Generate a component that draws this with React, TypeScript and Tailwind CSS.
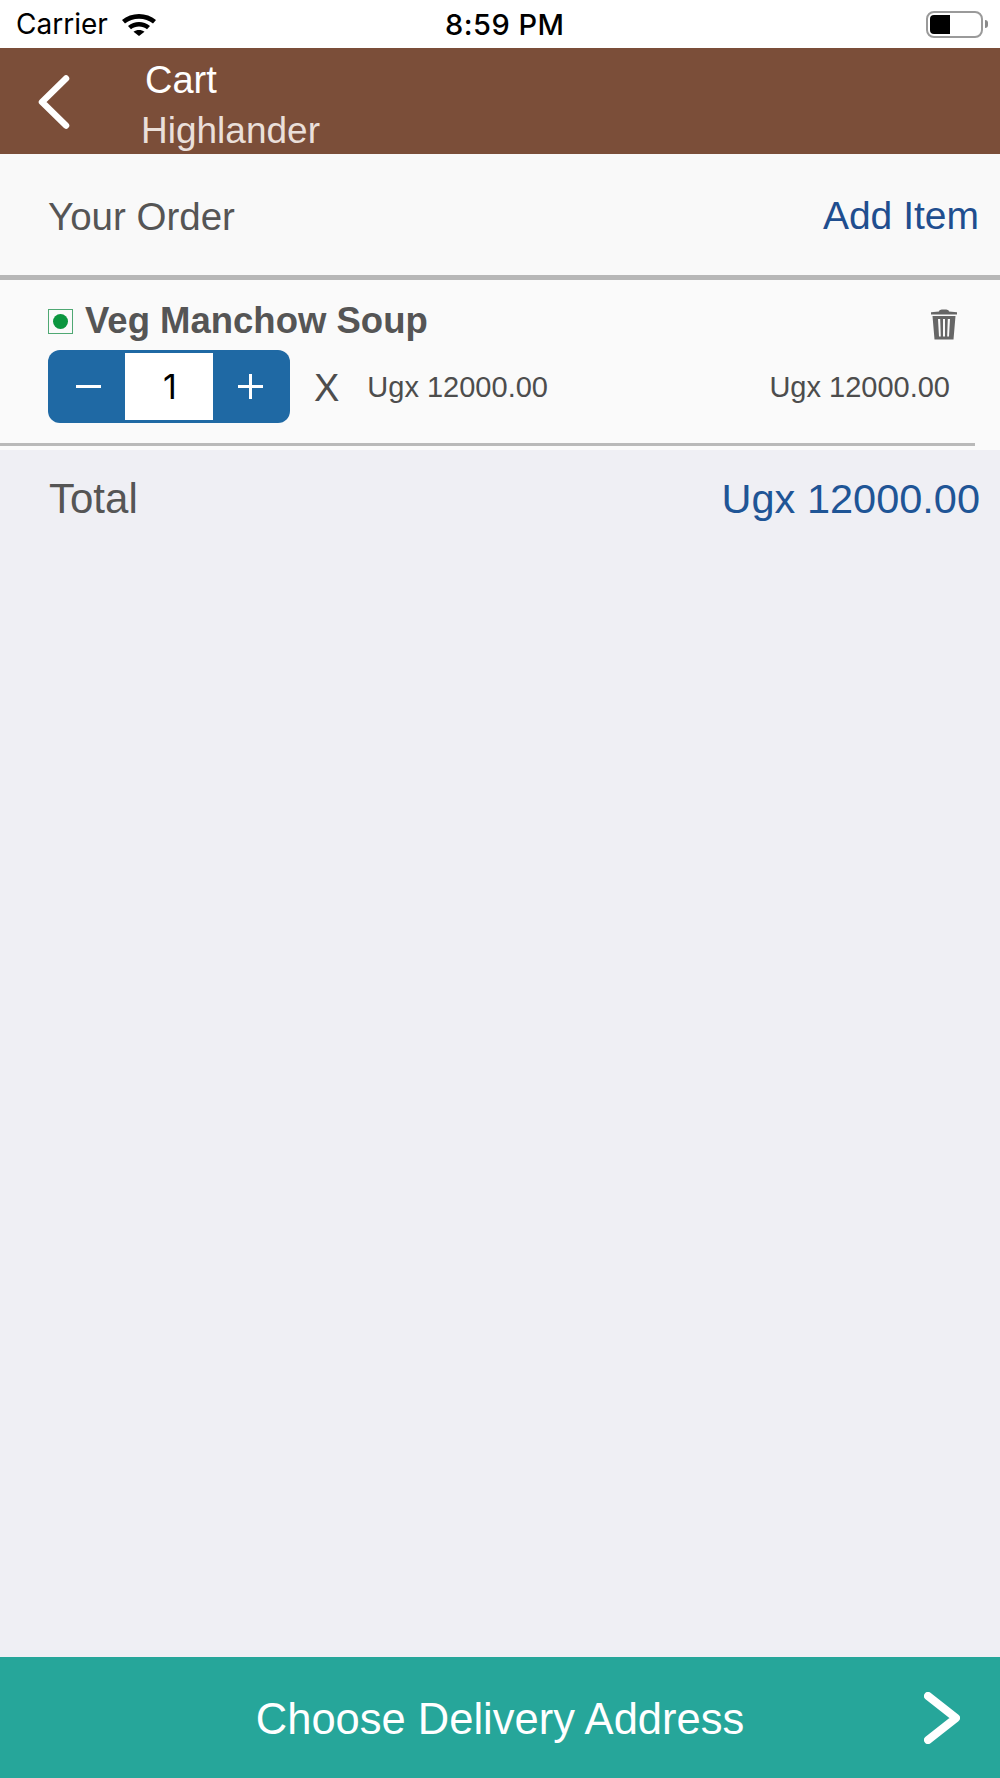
function Wifi() {
  return (
    <svg width="34" height="24" viewBox="0 0 34 24" fill="black">
      <path d="M0 8C9 0 25 0 34 8L31 11.5C23.5 5 10.5 5 3 11.5Z" />
      <path d="M6 14C12.5 8.5 21.5 8.5 28 14L25 17.3C20.5 13.5 13.5 13.5 9 17.3Z" />
      <path d="M11.5 19.8C14.6 17.5 19.4 17.5 22.5 19.8L17 24Z" />
    </svg>
  );
}

function TrashIcon() {
  return (
    <svg width="28" height="31" viewBox="0 0 28 31" fill="#666666">
      <path d="M9 2.5C9 1 10.5 0.5 14 0.5C17.5 0.5 19 1 19 2.5L27 3.2V5.5H1V3.2Z" />
      <path fillRule="evenodd" d="M2.5 7H25.5L23.5 30.5H4.5ZM8 10L9 27.5H10.8L10.2 10ZM13 10V27.5H15V10ZM17.8 10L17.2 27.5H19L20 10Z" />
    </svg>
  );
}

function StatusBar() {
  return (
    <div className="relative flex h-12 items-center justify-between bg-white pl-4 pr-3 font-['Inter',sans-serif] text-black">
      <div className="flex items-center gap-[14px]">
        <span className="text-[28px] leading-none">Carrier</span>
        <Wifi />
      </div>
      <span className="absolute left-[445px] top-[9px] text-[29px] font-medium leading-8 tracking-[0.5px]">8:59 PM</span>
      <div className="flex items-center gap-[2px]">
        <div className="flex h-[27px] w-[57px] items-center rounded-[8px] border-[2px] border-[#9a9a9a] p-[2px]">
          <div className="h-[19px] w-5 rounded-l-[4px] bg-black" />
        </div>
        <div className="h-2 w-[3px] rounded-r-full bg-[#8a8a8a]" />
      </div>
    </div>
  );
}

function Header() {
  return (
    <div className="flex h-[106px] items-center bg-[#7b4e39] pl-[38px]">
      <svg className="mt-[2px]" width="32" height="54" viewBox="0 0 32 54" fill="none" stroke="white" strokeWidth="6.5" strokeLinecap="round" strokeLinejoin="round">
        <path d="M28 3.5L4 27L28 50.5" />
      </svg>
      <div className="ml-[71px] flex flex-col pt-[7px]">
        <span className="ml-1 text-[38px] leading-[40px] text-white">Cart</span>
        <span className="mt-3 text-[37px] leading-[38px] text-[#eadfd9]">Highlander</span>
      </div>
    </div>
  );
}

function OrderItem() {
  return (
    <div className="bg-[#fafafa] pb-1">
      <div className="mr-[25px] border-b-[3px] border-[#b9b9b9] pl-12 pr-[25px] pt-[21px] pb-5">
        <div className="flex h-10 items-center justify-between">
          <div className="flex items-center gap-[12px]">
            <div className="flex size-[25px] items-center justify-center border border-[#4fa873]">
              <div className="size-[15px] rounded-full bg-[#0b963f]" />
            </div>
            <span className="text-[36.5px] font-bold leading-10 text-[#555555]">Veg Manchow Soup</span>
          </div>
          <div className="mr-[-8px] mt-[6px]"><TrashIcon /></div>
        </div>
        <div className="mt-[9px] flex items-center text-[#4d4d4d]">
          <div className="flex h-[73px] w-[242px] overflow-hidden rounded-[12px] bg-[#1f69a4] p-[3px]">
            <div className="flex w-[74px] items-center justify-center">
              <div className="h-[3px] w-[25px] bg-white" />
            </div>
            <div className="flex w-[88px] items-center justify-center bg-white pl-[2px] font-['Inter',sans-serif] text-[34px] leading-none text-black">1</div>
            <div className="flex flex-1 items-center justify-center">
              <svg width="25" height="25" viewBox="0 0 25 25" stroke="white" strokeWidth="3">
                <path d="M0 12.5H25M12.5 0V25" />
              </svg>
            </div>
          </div>
          <span className="ml-6 pt-[2px] text-[38px] leading-none">X</span>
          <span className="ml-[28px] pt-[2px] text-[29px] leading-none">Ugx 12000.00</span>
          <span className="ml-auto pt-[2px] text-[29px] leading-none">Ugx 12000.00</span>
        </div>
      </div>
    </div>
  );
}

export default function App() {
  return (
    <div className="flex h-[1778px] w-[1000px] flex-col bg-[#efeff4] font-['Liberation_Sans',sans-serif]">
      <StatusBar />
      <Header />
      <div className="flex h-[126px] items-center justify-between border-b-[5px] border-[#b7b7b7] bg-[#f9f9f9] pl-12 pr-[21px] pt-1">
        <span className="text-[38.5px] text-[#555555]">Your Order</span>
        <span className="text-[39px] text-[#1f4e8f]">Add Item</span>
      </div>
      <OrderItem />
      <div className="flex items-center justify-between pl-[49px] pr-5 pt-[25px]">
        <span className="text-[42px] leading-[48px] text-[#555555]">Total</span>
        <span className="text-[41.5px] leading-[48px] text-[#1f5596]">Ugx 12000.00</span>
      </div>
      <div className="mt-auto flex h-[121px] items-center bg-[#26a69a] pl-[76px] pr-10">
        <span className="flex-1 pt-1 text-center text-[43.5px] text-white">Choose Delivery Address</span>
        <svg width="36" height="52" viewBox="0 0 36 52" fill="none" stroke="white" strokeWidth="8" strokeLinecap="round" strokeLinejoin="round">
          <path d="M4 4L32 26L4 48" />
        </svg>
      </div>
    </div>
  );
}
